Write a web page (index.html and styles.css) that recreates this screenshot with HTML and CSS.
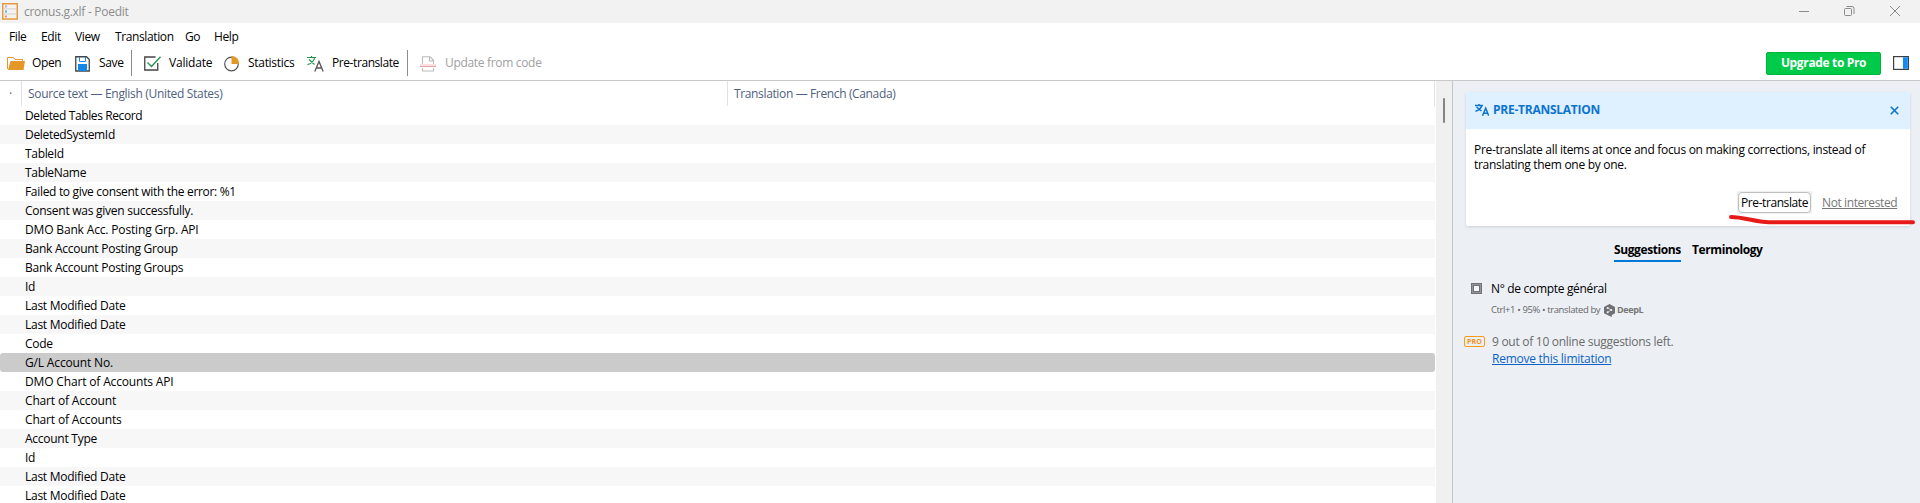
FILE: index.html
```
<!DOCTYPE html>
<html lang="en">
<head>
<meta charset="utf-8">
<title>cronus.g.xlf - Poedit</title>
<link rel="stylesheet" href="styles.css">
</head>
<body>
<header class="titlebar">
  <svg class="app-icon" width="16" height="17" viewBox="0 0 16 17"><rect x=".75" y=".75" width="14.5" height="15.3" fill="#f4f4f4" stroke="#e89a3c" stroke-width="1.5"/><path d="M2 5.9h12M2 11h12" stroke="#d0d0d0"/><path d="M3 2.5h2v2H3z" fill="#c9a0ec"/><path d="M3 7.5h2v2H3z" fill="#55b4e8"/><path d="M3 12.5h2v2H3z" fill="#ee9277"/></svg>
  <span class="title">cronus.g.xlf - Poedit</span>
  <svg class="window-buttons" width="102" height="12" viewBox="0 0 102 12" fill="none" stroke="#8b8b8b"><path d="M0 6.5h10"/><rect x="45.5" y="3.5" width="7" height="7" rx="1"/><path d="M47.5 1.5h5.5a2 2 0 0 1 2 2v5.5"/><path d="M91 1l10 10M101 1L91 11"/></svg>
</header>
<nav class="menu">
  <span class="m-file">File</span><span class="m-edit">Edit</span><span class="m-view">View</span><span class="m-translation">Translation</span><span class="m-go">Go</span><span>Help</span>
</nav>
<div class="toolbar">
  <div class="tool t-open"><svg width="18" height="15" viewBox="0 0 18 15"><path d="M.5 13V1.5h6l1.500 2h7.500V6" fill="#fff" stroke="#e59728"/><path d="M1 14L3.500 5H18l-1.500 9z" fill="#e59728"/></svg><span>Open</span></div>
  <div class="tool t-save"><svg width="15" height="16" viewBox="0 0 15 16"><path d="M.75.75H11.500l2.750 2.750v11.500H.75z" fill="#fff" stroke="#444" stroke-width="1.300"/><path d="M4.500 1v4.500h6V1" fill="none" stroke="#1287ea"/><path d="M3 8h9v7H3z" fill="#1287ea"/></svg><span>Save</span></div>
  <i class="sep"></i>
  <div class="tool t-validate"><svg width="17" height="15" viewBox="0 0 17 15" fill="none"><path d="M11.500 1H.75v13h13V7" stroke="#444" stroke-width="1.300"/><path d="M3.500 6.500l4 4L16.500.8" stroke="#249149" stroke-width="1.300"/></svg><span>Validate</span></div>
  <div class="tool t-stats"><svg width="15" height="16" viewBox="0 0 15 16"><circle cx="7.500" cy="8" r="6.800" fill="#fff" stroke="#555" stroke-width="1.200"/><path d="M7.500 0A7.500 7.500 0 0 1 15 8H7.500z" fill="#e59728"/></svg><span>Statistics</span></div>
  <div class="tool t-pre"><svg width="17" height="16" viewBox="0 0 17 16" fill="none"><path d="M0 1.500h9M4.500 0v1.500M2 3.500l5.500 5M7.500 2Q6.500 7 .5 8.700" stroke="#249149" stroke-width="1.200"/><path d="M7.800 15.500L12 5.500l4.200 10M9.200 12h5.600" stroke="#555" stroke-width="1.300"/></svg><span>Pre-translate</span></div>
  <i class="sep"></i>
  <div class="tool t-update"><svg width="16" height="16" viewBox="0 0 16 16" fill="none"><path d="M2.500 9V.8H10l3.500 3.500V9M9.500 1v4h4M2.500 12v3h11v-3" stroke="#bbb" stroke-width="1.100"/><path d="M0 8h16v2H0z" fill="#fbe0e1"/><path d="M0 10.500h16" stroke="#dfa4a6"/></svg><span>Update from code</span></div>
  <button class="upgrade"><span>Upgrade to Pro</span></button>
  <svg class="panel-toggle" width="16" height="14" viewBox="0 0 16 14"><rect x=".6" y=".6" width="14.800" height="12.800" fill="#fff" stroke="#404040" stroke-width="1.200"/><path d="M10 1.200h4.800v11.600H10z" fill="#128cf0"/></svg>
</div>
<main class="workspace">
  <section class="list">
    <div class="columns"><span class="dot">·</span><span class="col-source"><b>Source text — English (United States)</b></span><span class="col-target"><b>Translation — French (Canada)</b></span></div>
    <div class="rows">
      <p><span>Deleted Tables Record</span></p>
      <p><span>DeletedSystemId</span></p>
      <p><span>TableId</span></p>
      <p><span>TableName</span></p>
      <p><span>Failed to give consent with the error: %1</span></p>
      <p class="wide"><span>Consent was given successfully.</span></p>
      <p class="caps"><span>DMO Bank Acc. Posting Grp. API</span></p>
      <p class="wide"><span>Bank Account Posting Group</span></p>
      <p class="wide"><span>Bank Account Posting Groups</span></p>
      <p><span>Id</span></p>
      <p class="wide"><span>Last Modified Date</span></p>
      <p class="wide"><span>Last Modified Date</span></p>
      <p><span>Code</span></p>
      <p class="selected caps"><span>G/L Account No.</span></p>
      <p class="caps"><span>DMO Chart of Accounts API</span></p>
      <p class="caps"><span>Chart of Account</span></p>
      <p class="caps"><span>Chart of Accounts</span></p>
      <p class="wide"><span>Account Type</span></p>
      <p><span>Id</span></p>
      <p class="wide"><span>Last Modified Date</span></p>
      <p class="wide"><span>Last Modified Date</span></p>
    </div>
  </section>
  <div class="scroll"><i></i></div>
  <aside class="side">
    <div class="card">
      <div class="card-head">
        <svg width="14" height="12" viewBox="0 0 14 12" fill="none" stroke="#0b74cf" stroke-width="1.500"><path d="M0 1.500h8M4 0v1.500M1.500 3l5 4M6.500 2Q5.500 5.800.5 7.200"/><path d="M7.500 11.700l3.200-7.500 3 7.500M8.500 9.300h4.300"/></svg>
        <span class="card-title">PRE-TRANSLATION</span>
        <svg class="close" width="9" height="9" viewBox="0 0 9 9" stroke="#0b74cf" stroke-width="1.600"><path d="M.8.800l7.400 7.400M8.200.800L.800 8.200"/></svg>
      </div>
      <div class="card-text"><span>Pre-translate all items at once and focus on making corrections, instead of</span><br><span>translating them one by one.</span></div>
      <div class="actions"><div class="btn-back"><button class="pre-btn"><span>Pre-translate</span></button></div><a class="not">Not interested</a></div>
      <svg class="stroke" width="190" height="14" viewBox="0 0 190 14" fill="none" stroke="#e71919" stroke-width="4" stroke-linecap="round" stroke-linejoin="round"><path d="M3 3c13 0 24 5 38 5.200H185"/></svg>
    </div>
    <div class="tabs"><span class="tab active">Suggestions</span><span class="tab">Terminology</span></div>
    <div class="suggestion">
      <svg width="11" height="11" viewBox="0 0 11 11"><path d="M0 0h11v11H0z" fill="#707277"/><path d="M3 3h5v5H3z" fill="#f4f6f9"/><path d="M1.500 1.500h8v8h-8z" fill="none" stroke="#b5b8bc" stroke-dasharray="1 1"/></svg>
      <span class="sug-text">N° de compte général</span>
    </div>
    <div class="meta"><span class="meta-text">Ctrl+1 • 95% • translated by</span><svg width="11" height="13" viewBox="0 0 11 13"><path d="M5.500 0L11 3v6.200L7.800 11v2L5 11.800 0 9.200V3z" fill="#6f7175"/><path d="M3.800 4l3.400 2L3.800 8.200" fill="none" stroke="#d5d8dc" stroke-width=".8"/><circle cx="3.700" cy="4" r="1" fill="#edf0f5"/><circle cx="7.300" cy="6.100" r="1" fill="#edf0f5"/><circle cx="3.700" cy="8.200" r="1" fill="#edf0f5"/></svg><span class="deepl">DeepL</span></div>
    <div class="quota"><span class="pro"><span>PRO</span></span><div><div><span>9 out of 10 online suggestions left.</span></div><a class="remove">Remove this limitation</a></div></div>
  </aside>
</main>
</body>
</html>
```
FILE: styles.css
```
* { box-sizing: border-box; }
body { margin: 0; width: 1920px; height: 503px; overflow: hidden; display: flex; flex-direction: column; background: #fff; color: #000; font: 12px/16px "Open Sans", "Noto Sans", sans-serif; letter-spacing: -0.32px; white-space: nowrap; }
svg { display: block; flex: none; }
button { font: inherit; letter-spacing: inherit; padding: 0; }
.titlebar { height: 23px; flex: none; display: flex; align-items: center; background: #f2f2f2; color: #8c8c8c; padding-left: 2px; letter-spacing: -0.28px; }
.app-icon { margin-right: 6px; }
.titlebar .title { padding-top: 1px; }
.window-buttons { margin-left: auto; margin-right: 19px; margin-top: -2px; }
.menu { height: 28px; flex: none; display: flex; align-items: center; padding-left: 9px; letter-spacing: -0.38px; }
.m-file { width: 32px; }
.m-edit { width: 34px; }
.m-view { width: 40px; }
.m-translation { width: 70px; }
.m-go { width: 29px; }
.toolbar { height: 30px; flex: none; display: flex; align-items: center; border-bottom: 1px solid #c8c8c8; padding-left: 7px; padding-bottom: 5px; letter-spacing: -0.35px; }
.tool { display: flex; align-items: center; gap: 8px; flex: none; }
.tool svg { margin-top: 1px; }
.t-open { width: 68px; gap: 7px; }
.t-save { width: 56px; gap: 9px; }
.t-validate { width: 80px; margin-left: 12px; letter-spacing: -0.2px; }
.t-stats { width: 83px; gap: 9px; letter-spacing: -0.3px; }
.t-pre { width: 100px; letter-spacing: -0.42px; }
.t-update { margin-left: 12px; gap: 9px; color: #a0a0a0; letter-spacing: -0.32px; }
.sep { width: 1px; height: 26px; background: #8c8c8c; flex: none; }
.upgrade { margin-left: auto; width: 115px; height: 23px; background: #00cb48; border: 1px solid #00b43a; border-radius: 2px; color: #fff; font-weight: 700; }
.panel-toggle { margin: 0 11px 0 12px; }
.workspace { flex: 1; min-height: 0; display: flex; }
.list { width: 1436px; overflow: hidden; }
.columns { height: 25px; width: 1435px; display: flex; color: #4f6180; border-right: 1px solid #e2e2e2; line-height: 26px; }
.columns b { font-weight: 400; }
.dot { width: 22px; padding-left: 9px; border-right: 1px solid #e2e2e2; }
.col-source { width: 706px; padding-left: 6px; border-right: 1px solid #e2e2e2; }
.col-target { padding-left: 6px; letter-spacing: -0.36px; }
.rows { width: 1435px; }
.rows p { margin: 0; height: 19px; line-height: 20px; padding-left: 25px; }
.rows p:nth-child(even) { background: #f7f7f7; }
.rows p.selected { background: #cbcbcb; border-radius: 3px; }
.rows p.caps { letter-spacing: -0.16px; }
.rows p.wide { letter-spacing: -0.26px; }
.rows p:first-child { letter-spacing: -0.38px; }
.scroll { width: 16px; background: #f0f0f0; padding: 17px 0 0 7px; }
.scroll i { display: block; width: 2px; height: 25px; background: #858585; border-radius: 1px; }
.side { width: 468px; border-left: 1px solid #c6c6c6; background: #ecf0f5; padding-top: 11px; }
.card { position: relative; margin-left: 13px; width: 444px; height: 134px; background: #fff; border-radius: 2px; box-shadow: 0 1px 3px rgba(50, 60, 80, .16); }
.card-head { height: 37px; display: flex; align-items: center; background: #dff0ff; border-radius: 2px 2px 0 0; padding: 0 11px 1px 9px; color: #0b74cf; letter-spacing: -0.25px; }
.card-title { margin-left: 4px; font-weight: 700; }
.close { margin-left: auto; }
.card-text { padding: 13px 8px 0; line-height: 15px; letter-spacing: -0.3px; }
.actions { display: flex; align-items: center; padding: 19px 0 0 271px; }
.btn-back { background: #f0f0f0; width: 75px; height: 23px; padding: 1px; }
.pre-btn { display: block; width: 73px; height: 21px; border: 1px solid #bfbfbf; border-radius: 4px; background: #fdfdfd; color: #000; letter-spacing: -0.42px; }
.not { margin-left: 10px; color: #777; text-decoration: underline; letter-spacing: -0.4px; }
.stroke { position: absolute; left: 262px; top: 122px; }
.tabs { display: flex; margin: 15px 0 0 161px; gap: 11px; height: 21px; font-weight: 700; letter-spacing: -0.4px; }
.tab { height: 21px; line-height: 18px; }
.tab.active { width: 67px; border-bottom: 2px solid #0078d7; }
.suggestion { display: flex; align-items: center; margin: 18px 0 0 18px; gap: 9px; height: 16px; }
.sug-text { padding-top: 2px; }
.meta { display: flex; align-items: center; margin: 7px 0 0 38px; height: 14px; font-size: 9.5px; color: #666; }
.meta-text { width: 113px; letter-spacing: -0.4px; }
.deepl { font-weight: 700; margin-left: 2px; color: #777; font-size: 9px; letter-spacing: -0.35px; }
.quota { display: flex; margin: 16px 0 0 11px; line-height: 17px; color: #6b6b6b; gap: 7px; letter-spacing: -0.28px; }
.pro { width: 21px; height: 11px; border: 1px solid #ff9a1c; border-radius: 2px; color: #f39019; font-size: 7px; line-height: 9px; font-weight: 700; text-align: center; letter-spacing: .2px; margin-top: 3px; }
.remove { color: #0b63c7; text-decoration: underline; letter-spacing: -0.25px; }
```
